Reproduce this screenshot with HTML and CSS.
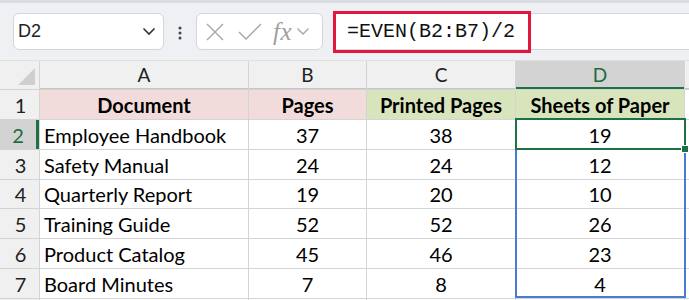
FILE: index.html
```html
<!DOCTYPE html>
<html lang="en">
<head>
    <meta charset="UTF-8">
    <title>EVEN sheets</title>
    <link rel="stylesheet" href="styles.css">
</head>
<body>
    <div class="toolbar">
        <div class="name-box">
            <span>D2</span>
            <svg width="14" height="9" viewBox="0 0 14 9"><path d="M1.5 1.5 L7 7 L12.5 1.5" fill="none" stroke="#333" stroke-width="1.6"/></svg>
        </div>
        <div class="grip">
            <svg width="4" height="14" viewBox="0 0 4 14"><circle cx="2" cy="2" r="1.5" fill="#444"/><circle cx="2" cy="7" r="1.5" fill="#444"/><circle cx="2" cy="12" r="1.5" fill="#444"/></svg>
        </div>
        <div class="fx-box">
            <svg width="20" height="20" viewBox="0 0 20 20"><path d="M2 2 L18 18 M18 2 L2 18" stroke="#a6a6a6" stroke-width="1.4"/></svg>
            <svg width="24" height="20" viewBox="0 0 24 20"><path d="M1 10 L8 17 L23 2" fill="none" stroke="#a6a6a6" stroke-width="1.4"/></svg>
            <span class="fx">fx</span>
            <svg width="14" height="9" viewBox="0 0 14 9"><path d="M1.5 1.5 L7 7 L12.5 1.5" fill="none" stroke="#a6a6a6" stroke-width="1.4"/></svg>
        </div>
        <div class="formula-bar">
            <span class="formula">=EVEN(B2:B7)/2</span>
        </div>
    </div>

    <div class="sheet">
        <div class="grid">
            <div class="corner"><span class="tri"></span></div>
            <div class="col-head">A</div>
            <div class="col-head">B</div>
            <div class="col-head">C</div>
            <div class="col-head active">D</div>
            <div class="col-head"></div>

            <div class="row-head">1</div>
            <div class="cell title pink">Document</div>
            <div class="cell title pink">Pages</div>
            <div class="cell title green">Printed Pages</div>
            <div class="cell title green">Sheets of Paper</div>
            <div class="cell blank"></div>

            <div class="row-head active">2</div>
            <div class="cell text">Employee Handbook</div>
            <div class="cell">37</div>
            <div class="cell">38</div>
            <div class="cell">19</div>
            <div class="cell blank"></div>

            <div class="row-head">3</div>
            <div class="cell text">Safety Manual</div>
            <div class="cell">24</div>
            <div class="cell">24</div>
            <div class="cell">12</div>
            <div class="cell blank"></div>

            <div class="row-head">4</div>
            <div class="cell text">Quarterly Report</div>
            <div class="cell">19</div>
            <div class="cell">20</div>
            <div class="cell">10</div>
            <div class="cell blank"></div>

            <div class="row-head">5</div>
            <div class="cell text">Training Guide</div>
            <div class="cell">52</div>
            <div class="cell">52</div>
            <div class="cell">26</div>
            <div class="cell blank"></div>

            <div class="row-head">6</div>
            <div class="cell text">Product Catalog</div>
            <div class="cell">45</div>
            <div class="cell">46</div>
            <div class="cell">23</div>
            <div class="cell blank"></div>

            <div class="row-head">7</div>
            <div class="cell text">Board Minutes</div>
            <div class="cell">7</div>
            <div class="cell">8</div>
            <div class="cell">4</div>
            <div class="cell blank"></div>

            <div class="row-head"></div>
            <div class="cell"></div>
            <div class="cell"></div>
            <div class="cell"></div>
            <div class="cell"></div>
            <div class="cell blank"></div>
        </div>

        <!-- selection overlays -->
        <div class="sel-spill"></div>
        <div class="sel-active"><span class="handle"></span></div>
    </div>
</body>
</html>
```

FILE: styles.css
```css
* {
    margin: 0;
    padding: 0;
    box-sizing: border-box;
}

body {
    width: 689px;
    height: 300px;
    overflow: hidden;
    background: #ffffff;
    font-family: Lato, 'Open Sans', sans-serif;
    color: #000;
}

.toolbar {
    height: 60px;
    background: #eef0f3;
    border-top: 3px solid #d8dbdf;
    display: flex;
    align-items: center;
    padding-left: 13px;
}

.name-box {
    width: 151px;
    height: 37px;
    background: #fff;
    border: 1px solid #d3d6da;
    border-radius: 6px;
    display: flex;
    align-items: center;
    justify-content: space-between;
    padding: 0 7px 0 4px;
    font-family: 'Liberation Sans', Arial, sans-serif;
    font-size: 18px;
    color: #222;
}

.grip {
    width: 32px;
    display: flex;
    justify-content: center;
    padding-top: 2px;
}

.fx-box {
    width: 127px;
    height: 37px;
    background: #fff;
    border: 1px solid #d3d6da;
    border-radius: 6px;
    display: flex;
    align-items: center;
    padding-left: 8px;
}

.fx-box svg:nth-child(2) {
    margin-left: 13px;
}

.fx {
    font-family: 'Liberation Serif', serif;
    font-style: italic;
    font-size: 25px;
    line-height: 1;
    color: #a0a0a0;
    margin-left: 11px;
    margin-right: 4px;
    letter-spacing: 0.5px;
}

.formula-bar {
    flex: 1;
    height: 37px;
    margin-left: 10px;
    background: #fff;
    border-top: 1px solid #d3d6da;
    border-bottom: 1px solid #d3d6da;
    display: flex;
    align-items: center;
}

.formula {
    display: inline-flex;
    align-items: center;
    height: 42px;
    width: 198px;
    border: 3px solid #e1173f;
    padding-left: 11px;
    font-family: 'Liberation Mono', 'DejaVu Sans Mono', monospace;
    font-size: 20px;
    color: #111;
}

.sheet {
    position: relative;
}

.grid {
    display: grid;
    grid-template-columns: 39px 208px 117px 148px 168px 1fr;
    grid-template-rows: 28px 29px 29px 29px 28px 29px 29px 29px 10px;
    gap: 1px;
    background: #d4d4d4;
    border-top: 1px solid #e0e0e0;
    font-size: 20px;
}

.corner {
    background: #f0f0f0;
    position: relative;
}

.tri {
    position: absolute;
    right: 4px;
    bottom: 4px;
    width: 0;
    height: 0;
    border-left: 17px solid transparent;
    border-bottom: 17px solid #cfcfcf;
}

.col-head {
    background: #f0f0f0;
    display: flex;
    align-items: center;
    justify-content: center;
    color: #222;
    font-size: 19px;
    border-bottom: 1px solid #c6c6c6;
}

.col-head.active {
    background: #d3d3d3;
    color: #1d6b3f;
    border-bottom: 2px solid #1e7145;
}

.row-head {
    background: #f0f0f0;
    display: flex;
    align-items: center;
    justify-content: center;
    padding-left: 2px;
    color: #222;
}

.row-head.active {
    background: #d3d3d3;
    color: #1d6b3f;
    border-right: 3px solid #1e7145;
    padding-left: 0;
}

.cell {
    background: #fff;
    display: flex;
    align-items: center;
    justify-content: center;
    white-space: nowrap;
}

.cell.text {
    justify-content: flex-start;
    padding-left: 4px;
}

.title {
    font-weight: bold;
}

.pink {
    background: #f2dcdb;
}

.green {
    background: #d8e4bc;
}

.sel-spill {
    position: absolute;
    left: 515px;
    top: 90px;
    width: 171px;
    height: 148px;
    border: 2px solid #4a7bd0;
    border-top: none;
}

.sel-active {
    position: absolute;
    left: 515px;
    top: 58px;
    width: 171px;
    height: 32px;
    border: 2px solid #1e7145;
}

.handle {
    position: absolute;
    right: -5px;
    bottom: -5px;
    width: 8px;
    height: 8px;
    background: #1e7145;
    border: 1px solid #fff;
}
```
